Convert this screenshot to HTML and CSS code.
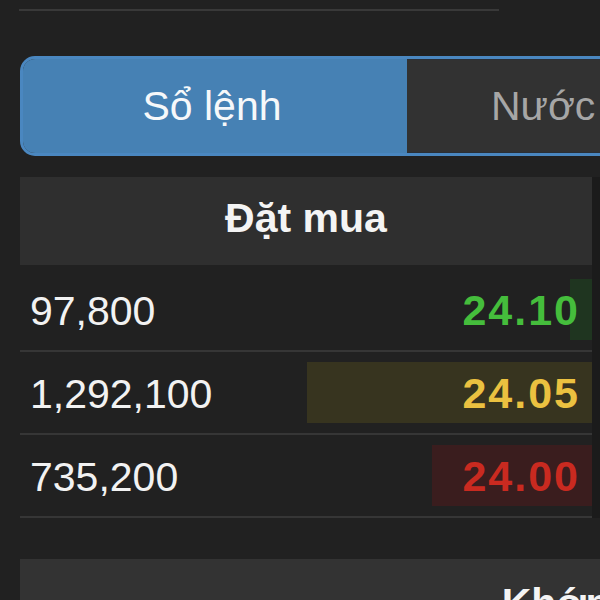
FILE: index.html
```html
<!DOCTYPE html>
<html lang="vi">
<head>
<meta charset="utf-8">
<title>Sổ lệnh</title>
<link rel="stylesheet" href="styles.css">
</head>
<body>
<div class="page">
  <div class="top-line"></div>
  <div class="segmented">
    <div class="seg seg-active">Sổ lệnh</div>
    <div class="seg seg-idle">Nước ngoài</div>
  </div>
  <div class="board">
    <section class="col">
      <div class="col-head">Đặt mua</div>
      <div class="rows">
        <div class="row">
          <span class="qty">97,800</span>
          <span class="bar bar-green" style="width:22px"></span>
          <span class="price up">24.10</span>
        </div>
        <div class="row">
          <span class="qty">1,292,100</span>
          <span class="bar bar-yellow" style="width:285px"></span>
          <span class="price ref">24.05</span>
        </div>
        <div class="row">
          <span class="qty">735,200</span>
          <span class="bar bar-red" style="width:160px"></span>
          <span class="price down">24.00</span>
        </div>
      </div>
    </section>
    <div class="divider"></div>
    <section class="col">
      <div class="col-head">Đặt bán</div>
    </section>
  </div>
  <div class="match-head">Khớp lệnh</div>
</div>
</body>
</html>
```
FILE: styles.css
```css
html, body {
  margin: 0;
  padding: 0;
  background: #212121;
  overflow: hidden;
  width: 600px;
  height: 600px;
}
.page {
  width: 1300px;
  padding-left: 20px;
  font-family: "Liberation Sans", Arial, sans-serif;
  color: #f2f2f2;
  font-size: 41px;
}
.top-line {
  margin-top: 9px;
  margin-left: -1px;
  width: 480px;
  height: 2px;
  background: #393939;
}
.segmented {
  margin-top: 45px;
  width: 774px;
  height: 100px;
  box-sizing: border-box;
  display: flex;
  border: 3px solid #4a87c0;
  border-radius: 15px;
  overflow: hidden;
  background: #323232;
}
.seg {
  flex: 0 0 auto;
  display: flex;
  align-items: center;
  justify-content: center;
  white-space: nowrap;
}
.seg-active {
  width: 384px;
  background: #4681b4;
  color: #f6f8fa;
  padding-right: 6px;
  box-sizing: border-box;
}
.seg-idle {
  flex: 1;
  color: #a6a6a6;
  border-top: 1px solid #2a2f36;
  border-bottom: 1px solid #2a2f36;
}
.board {
  margin-top: 21px;
  display: grid;
  grid-template-columns: 572px 8px 572px;
}
.divider {
  background: #1b1b1b;
}
.col-head {
  height: 88px;
  box-sizing: border-box;
  padding-bottom: 6px;
  line-height: 82px;
  text-align: center;
  background: #2f2f2f;
  font-weight: bold;
  color: #f4f4f4;
}
.rows {
  padding-top: 4px;
}
.row {
  position: relative;
  height: 81px;
  box-sizing: content-box;
  border-bottom: 2px solid #363636;
  display: flex;
  align-items: center;
  justify-content: space-between;
}
.qty {
  padding-left: 10px;
  padding-top: 3px;
  position: relative;
}
.bar {
  position: absolute;
  right: 0;
  top: 10px;
  height: 61px;
}
.bar-green { background: #1f3520; }
.bar-yellow { background: #37341f; }
.bar-red { background: #3a1d1e; }
.price {
  position: relative;
  padding-right: 12px;
  padding-top: 2px;
  font-weight: bold;
  font-size: 43px;
  letter-spacing: 2px;
}
.up { color: #45bd3c; }
.ref { color: #ebc140; }
.down { color: #c92a20; }
.match-head {
  margin-top: 41px;
  width: 1168px;
  height: 88px;
  line-height: 88px;
  text-align: center;
  background: #333333;
  font-weight: bold;
  color: #f4f4f4;
}
```
